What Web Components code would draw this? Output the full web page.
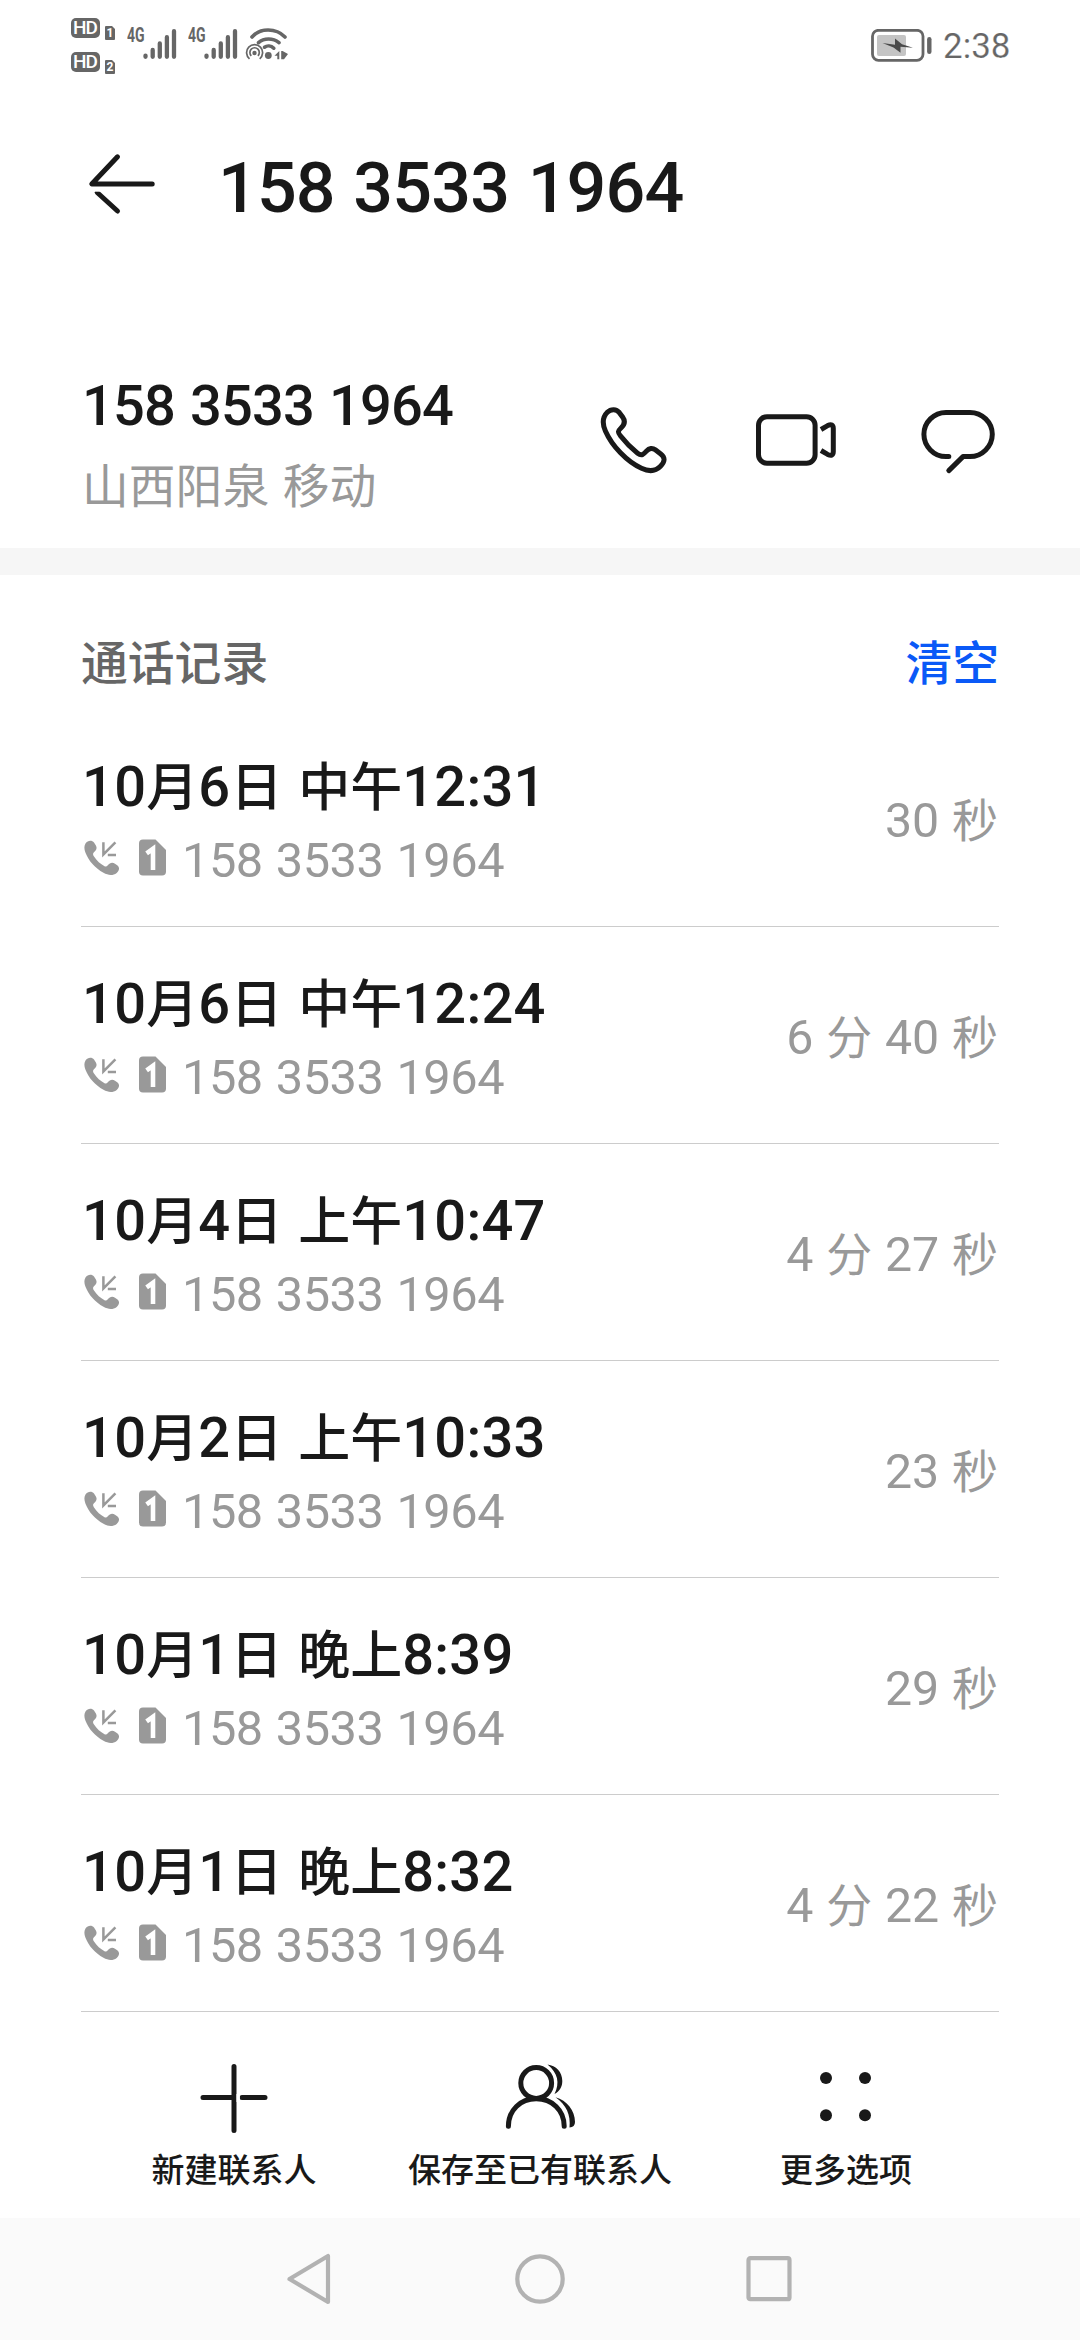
<!DOCTYPE html>
<html lang="zh-CN">
<head>
<meta charset="utf-8">
<meta name="viewport" content="width=1080">
<title>通话记录</title>
<style>
  html, body { margin: 0; padding: 0; background: #fff; }
  body { width: 1080px; height: 2340px; overflow: hidden; font-family: Roboto, "Noto Sans CJK SC", sans-serif; }
</style>
</head>
<body>
<call-detail-page></call-detail-page>
<script>
const define = (name, markup, setup) => {
  const tpl = document.createElement('template');
  tpl.innerHTML = markup;
  customElements.define(name, class extends HTMLElement {
    constructor() {
      super();
      this.attachShadow({ mode: 'open' }).append(tpl.content.cloneNode(true));
    }
    connectedCallback() { if (setup) setup(this, this.shadowRoot); }
  });
};

/* Line of text whose Latin digits are set slightly larger than the Han characters. */
define('mixed-text', `
<style>
  :host { display: block; }
  #t { display: block; white-space: pre; }
  .n { font-size: var(--digit-scale, 1.077em); line-height: 0; letter-spacing: var(--digit-spacing, 0); word-spacing: var(--gap, 0); }
</style><span id="t"></span>`, (el, root) => {
  const out = root.getElementById('t');
  out.textContent = '';
  for (const part of (el.getAttribute('text') || '').match(/[\d: ]+|[^\d: ]+/g) || []) {
    const s = document.createElement('span');
    if (/[\d: ]/.test(part)) s.className = 'n';
    s.textContent = part;
    out.append(s);
  }
});

define('hd-badge', `
<style>
  :host { display: flex; align-items: flex-end; gap: 5px; height: 22px; }
  .hd { width: 29px; height: 20px; border-radius: 5px; background: #666; color: #fff; align-self: flex-start;
        font: 500 19px/20px Roboto, sans-serif; letter-spacing: -1px; text-align: center; text-indent: -1px; }
  .sim { width: 10px; height: 14px; background: #666; color: #fff; border-radius: 1px;
         clip-path: polygon(0 0, 70% 0, 100% 22%, 100% 100%, 0 100%);
         font: 700 12px/15px Roboto, sans-serif; text-align: center; }
</style>
<span class="hd">HD</span><span class="sim"><slot></slot></span>`);

define('signal-bars', `
<style>
  :host { display: flex; height: 32px; }
  span { font: 700 20px/20px Roboto, sans-serif; color: #666; width: 16px; white-space: nowrap; }
  b { display: block; font-weight: 700; transform: scaleX(.7); transform-origin: 0 0; line-height: 15px; }
  svg { display: block; }
</style>
<span><b>4G</b></span>
<svg width="35" height="32" viewBox="0 0 35 32" stroke="#666" stroke-width="4.3" stroke-linecap="round">
  <path d="M2.5 27.6v1.2M9.7 22v6.8M16.8 15.4v13.4M23.9 9.2v19.6M31 3.2v25.6"/>
</svg>`);

define('status-bar', `
<style>
  :host { display: flex; height: 90px; box-sizing: border-box; padding: 0 71px; justify-content: space-between; color: #666; }
  .l { display: flex; padding-top: 18px; }
  .hds { display: flex; flex-direction: column; gap: 12px; width: 56px; }
  signal-bars { margin-top: 10px; width: 61px; }
  .wifi { margin: 10px 0 0 -4px; }
  .r { display: flex; padding-top: 29px; }
  svg { display: block; }
  time { font: 400 35px/41px Roboto, sans-serif; margin: -3px -1px 0 11px; width: 67px; -webkit-text-stroke: .2px #fff; white-space: nowrap; }
</style>
<div class="l">
  <div class="hds"><hd-badge>1</hd-badge><hd-badge>2</hd-badge></div>
  <signal-bars></signal-bars><signal-bars></signal-bars>
  <svg class="wifi" width="44" height="32" viewBox="0 0 44 32" fill="none" stroke="#666">
    <g stroke-width="3.6" stroke-linecap="round">
      <path d="M7 9C15-.3 31-.3 40 9M13.5 14.7C19 9.8 28 9.8 34 14.7" />
      <path d="M19.5 19.2C22 17.4 26 17.4 28.8 20.2"/>
    </g>
    <path stroke-width="1.7" d="M4.5 30.8A8 8 0 1 1 14.7 30.8M6.3 27.8A4.7 4.7 0 1 1 12.9 27.8"/>
    <g fill="#666" stroke="none"><circle cx="9.5" cy="25" r="2.2"/><circle cx="23.3" cy="27.5" r="3.4"/>
    <path d="M29.5 27.8L34.3 23v8.2h-2v-3.4zM36.2 23h1.4l5.4 3-4 5.2h-2.8z"/></g>
  </svg>
</div>
<div class="r">
  <svg width="61" height="33" viewBox="0 0 61 33">
    <rect x="1.5" y="1.3" width="50.5" height="30" rx="6" fill="none" stroke="#666" stroke-width="2.8"/>
    <rect x="6" y="6" width="29" height="21" rx="2" fill="#c4c4c4"/>
    <path d="M11.5 14L24 15.8V9.6L31 15.3L42 18.8L29.5 17.8V23.8L22.5 18.5Z" fill="#4a4a4a"/>
    <path d="M58.3 10.2v12.6" stroke="#666" stroke-width="4.4" stroke-linecap="round"/>
  </svg>
  <time>2:38</time>
</div>`);

define('title-bar', `
<style>
  :host { display: flex; height: 257px; padding: 48px 0 0 86px; box-sizing: border-box; }
  svg { display: block; margin-top: 14px; width: 72px; height: 64px; flex: none; }
  mixed-text { font-size: 70px; font-weight: 500; line-height: 100px; color: #191919; margin-left: 60px; --digit-scale: 1em; --digit-spacing: -.85px; --gap: 2px; }
</style>
<svg viewBox="0 0 72 64" fill="none" stroke="#191919" stroke-width="5" stroke-linecap="round" stroke-linejoin="round">
  <path d="M31.5 4.8L5.8 32H66.2"/><path d="M11.2 40.5L31.5 59" />
  <path d="M3 38.2h14" stroke="#fff" stroke-width="3" stroke-linecap="butt"/>
</svg>
<mixed-text text="158 3533 1964"></mixed-text>`);

define('contact-card', `
<style>
  :host { display: flex; justify-content: space-between; height: 201px; padding: 26px 82px 0 82px; box-sizing: border-box; }
  .num { font-size: 56px; font-weight: 500; line-height: 66px; color: #191919; --digit-scale: 1em; --digit-spacing: -.85px; --gap: 2px; }
  .loc { font-size: 46.8px; line-height: 60px; color: #999; margin-top: 18px; --gap: 1px; }
  .acts { display: flex; gap: 82px; padding-top: 30px; }
  svg { display: block; width: 80px; height: 72px; flex: none; }
</style>
<div>
  <mixed-text class="num" text="158 3533 1964"></mixed-text>
  <mixed-text class="loc" text="山西阳泉 移动"></mixed-text>
</div>
<div class="acts">
  <svg viewBox="594 403 80 72" fill="none" stroke="#191919" stroke-width="5" stroke-linejoin="round">
    <path d="M619.2 412.4C616.5 408.9 611 408.6 607.3 412.3C602.5 417.2 602.4 424.2 605.4 431C612 446 627 461.8 641.5 468.3C648.5 471.6 655.5 471.5 660.5 466.3C665 461.6 665.4 457.6 660.8 454L655.3 449.8C652.5 447.7 649 448.2 646.7 450.8C643.5 454.3 641.8 456.4 637.6 453.2C631.5 448.4 625.4 442.2 620.6 436C617.6 432.2 617.7 431.1 621 428C624.8 424.5 625.3 420.8 622.6 417Z"/>
  </svg>
  <svg viewBox="756 403 80 72" fill="none" stroke="#191919" stroke-width="5">
    <rect x="758.5" y="416.7" width="56.6" height="46.6" rx="8.5"/>
    <path d="M821 429.5L827.6 425.6Q833.3 423 833.3 428.5V451.5Q833.3 457 827.6 454.4L821 450.5"/>
  </svg>
  <svg viewBox="918 403 80 72" fill="none" stroke="#191919" stroke-width="5" stroke-linecap="round" stroke-linejoin="round">
    <path d="M948.8 456.6H946C933.8 456.6 923.9 446.2 923.9 434.3S933.8 412.4 946 412.4H970C982.2 412.4 992.3 422.4 992.3 434.3S982.2 456.6 970 456.6H963L948.8 470.6"/>
  </svg>
</div>`);

define('call-row', `
<style>
  :host { display: flex; justify-content: space-between; height: 217px; box-sizing: border-box; border-bottom: 1px solid #ccc; }
  .when { font-size: 52px; font-weight: 500; line-height: 64px; color: #191919; margin: 47px 0 15px 1px; --gap: 1.5px; --digit-spacing: .3px; }
  .from { display: flex; color: #999; height: 50px; }
  .from mixed-text { font-size: 46px; line-height: 50px; margin-left: 16px; --digit-scale: 1.06em; --digit-spacing: -.5px; --gap: 1.5px; }
  .phone { display: block; width: 38px; height: 38px; margin: 3px 0 0 2px; }
  .sim { display: block; width: 27px; height: 37px; margin: 3px 0 0 18px; }
  .dur { font-size: 46px; line-height: 60px; color: #999; margin-top: 81px; margin-right: 1px; --digit-scale: 1.05em; --gap: .8px; }
</style>
<div>
  <mixed-text class="when"></mixed-text>
  <div class="from">
    <svg class="phone" viewBox="83 839 38 38" fill="#999">
      <path d="M85.5 843.5C87.8 840 92 839.7 94 842.6L95.9 845.4C97.3 848 96.5 850 94.2 852C92.7 853.3 92.7 854.5 94 856.5C96.9 860.8 100.4 864 104.5 866.2C105.7 866.8 106.8 866.5 107.8 865.3C109.8 862.6 112.5 862 115 863.7L117.5 865.5C119.8 867.4 119.5 870.6 116.7 872.9C112.8 876 108 875.4 103.5 872.8C95.2 868 88.6 860.8 85.4 852.4C84.1 849 84 846 85.5 843.5Z"/>
      <path d="M103.4 842.2V854.5L115.4 842.4M107.8 855H116" fill="none" stroke="#999" stroke-width="2.5"/>
    </svg>
    <svg class="sim" viewBox="0 0 27 37">
      <path d="M4 .5H16.5L27 11V32.5Q27 36.5 23 36.5H4Q0 36.5 0 32.5V4.5Q0 .5 4 .5Z" fill="#999"/>
      <path d="M7.6 14.4L14 9.8V31" fill="none" stroke="#fff" stroke-width="4.6"/>
    </svg>
    <mixed-text text="158 3533 1964"></mixed-text>
  </div>
</div>
<mixed-text class="dur"></mixed-text>`, (el, root) => {
  root.querySelector('.when').setAttribute('text', el.getAttribute('when'));
  root.querySelector('.dur').setAttribute('text', el.getAttribute('duration'));
  root.querySelectorAll('.when, .dur').forEach(n => n.connectedCallback && n.connectedCallback());
});

define('call-log', `
<style>
  :host { display: block; height: 1492px; box-sizing: border-box; border-top: 27px solid #f6f6f6; padding: 0 81px; }
  header { display: flex; justify-content: space-between; height: 135px; padding-top: 59px; box-sizing: border-box;
           font-size: 46.8px; line-height: 60px; font-weight: 500; color: #666; }
  a { color: #0a59f7; }
</style>
<header><span>通话记录</span><a>清空</a></header>
<call-row when="10月6日 中午12:31" duration="30 秒"></call-row>
<call-row when="10月6日 中午12:24" duration="6 分 40 秒"></call-row>
<call-row when="10月4日 上午10:47" duration="4 分 27 秒"></call-row>
<call-row when="10月2日 上午10:33" duration="23 秒"></call-row>
<call-row when="10月1日 晚上8:39" duration="29 秒"></call-row>
<call-row when="10月1日 晚上8:32" duration="4 分 22 秒"></call-row>`);

define('tool-button', `
<style>
  :host { display: flex; flex-direction: column; align-items: center; width: 306px; font-size: 33px; font-weight: 500; line-height: 40px; color: #191919; white-space: nowrap; }
  ::slotted(svg) { display: block; width: 72px; height: 72px; margin-bottom: 17px; }
</style><slot name="icon"></slot><span><slot></slot></span>`);

define('tool-bar', `
<style>
  :host { display: flex; justify-content: center; height: 178px; padding-top: 22px; box-sizing: border-box; }
</style>
<tool-button><svg slot="icon" viewBox="0 0 72 72" stroke="#191919" stroke-width="5" stroke-linecap="round"><path d="M36 4.6V68.6M5 35.6H36M67 35.6H44"/><path d="M40.2 32v8" stroke="#fff" stroke-width="3.4" stroke-linecap="butt"/></svg>新建联系人</tool-button>
<tool-button><svg slot="icon" viewBox="504 2062 72 72" fill="none" stroke="#191919" stroke-width="5" stroke-linecap="round">
  <circle cx="536.2" cy="2083" r="15.4"/><path d="M508.4 2126.3C508.4 2110 520.5 2098.8 536.2 2098.8S564.2 2110 564.2 2126.3"/>
  <path fill="#191919" stroke="none" d="M547.5 2064.5C556 2065.5 562.3 2072 562.3 2081C562.3 2087 559.5 2091.5 554.5 2094C560 2083 558 2073 547.5 2064.5ZM555.5 2097.3C567 2100.5 575 2110.5 575 2122Q575 2127.2 569.5 2127.5C570.8 2115 566.5 2105 555.5 2097.3Z"/></svg>保存至已有联系人</tool-button>
<tool-button><svg slot="icon" viewBox="0 0 72 72" fill="#191919"><circle cx="16" cy="16" r="6"/><circle cx="55" cy="16" r="6"/><circle cx="16" cy="53.2" r="6"/><circle cx="55" cy="53.2" r="6"/></svg>更多选项</tool-button>`);

define('nav-bar', `
<style>
  :host { display: flex; justify-content: center; gap: 169px; align-items: center; height: 122px; background: #fafafa; }
  svg { display: block; width: 60px; height: 60px; }
</style>
<svg viewBox="0 0 60 60" fill="none" stroke="#b2b2b2" stroke-width="4.2" stroke-linejoin="round"><path d="M47 7V53L8.5 30Z"/></svg>
<svg viewBox="0 0 60 60" fill="none" stroke="#b2b2b2" stroke-width="4.2"><circle cx="30" cy="30" r="22.7"/></svg>
<svg viewBox="0 0 60 60" fill="none" stroke="#b2b2b2" stroke-width="4.2"><rect x="9.5" y="9.2" width="41" height="41" rx="1.8"/></svg>`);

define('call-detail-page', `
<style>:host { display: flex; flex-direction: column; width: 1080px; height: 2340px; background: #fff; }</style>
<status-bar></status-bar>
<title-bar></title-bar>
<contact-card></contact-card>
<call-log></call-log>
<tool-bar></tool-bar>
<nav-bar></nav-bar>`);
</script>
</body>
</html>
